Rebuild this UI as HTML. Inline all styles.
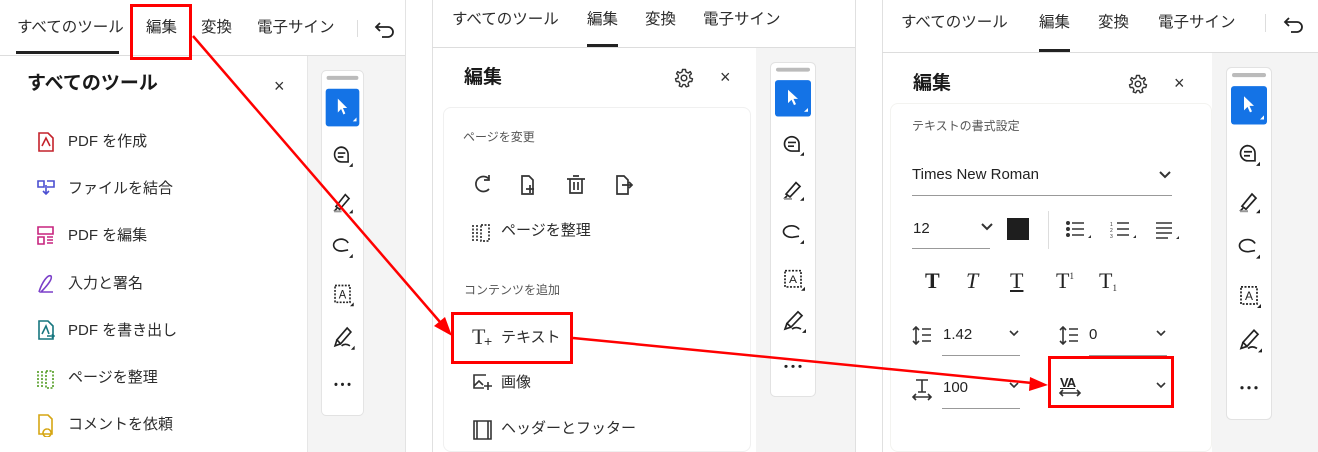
<!DOCTYPE html>
<html><head><meta charset="utf-8">
<style>
*{margin:0;padding:0;box-sizing:border-box}
body{width:1318px;height:452px;background:#fff;position:relative;overflow:hidden;font-family:"Liberation Sans","Noto Sans CJK JP",sans-serif;color:#222}
.a{position:absolute;white-space:nowrap}
.tab{font-size:15.5px;color:#2c2c2c;line-height:20px}
.item{font-size:15px;color:#2c2c2c;line-height:20px}
.h{font-size:19px;font-weight:bold;color:#1a1a1a;line-height:24px}
.sm{font-size:12px;color:#555;line-height:16px}
.gray{position:absolute;background:#f4f4f4}
.line{position:absolute;background:#ddd}
.tb{position:absolute}
.red{position:absolute;border:3.5px solid #f00}
</style></head><body>

<svg width="0" height="0" style="position:absolute">
<symbol id="tbar" viewBox="0 0 46 350" preserveAspectRatio="none">
<rect x="0.5" y="0.5" width="45" height="349" rx="5" fill="#fff" stroke="#e2e2e2"/>
<rect x="6" y="6" width="34" height="4" rx="2" fill="#bbb"/>
<rect x="5" y="19" width="36" height="38" rx="3" fill="#1473e6"/>
<path d="M18 29 V43 L21.5 39.5 L24 45 L26 44 L23.5 38.5 L28 38.5 Z" fill="#fff"/><path d="M34 52 L38 52 L38 48Z" fill="#fff"/>
<g fill="none" stroke="#222" stroke-width="1.7">
<path d="M22 78 a7.5 7.5 0 1 0 0 15 h7 v-7.5 a7.5 7.5 0 0 0 -7 -7.5z M18 84 H26 M18 88 H24"/>
<path d="M16 138 L26 126 L30 130 L20 141 Z M14 143 L17 140"/>
<path d="M29 175 a8 6 0 1 0 -6 8 L29 182"/>
<rect x="15" y="218" width="16" height="17" stroke-dasharray="2 1.5"/>
<path d="M17 273 L28 261 L32 265 L21 277 Z M17 273 L15 279 L21 277 M22 279 q4 -3 9 0"/>
</g>
<path d="M14 143 L22 143" stroke="#999" stroke-width="2"/>
<text x="23" y="231" font-size="12" text-anchor="middle" font-family="Liberation Sans" fill="#222">A</text>
<g fill="#222"><path d="M30 98 L34 98 L34 94Z M30 145 L34 145 L34 141Z M30 190 L34 190 L34 186Z M31 239 L35 239 L35 235Z M32 283 L36 283 L36 279Z"/>
<circle cx="16" cy="318" r="1.6"/><circle cx="23" cy="318" r="1.6"/><circle cx="30" cy="318" r="1.6"/></g>
</symbol>
<symbol id="gear" viewBox="0 0 20 20"><circle cx="10" cy="10" r="2.8" fill="none" stroke="#333" stroke-width="1.5"/><path d="M8.5 1.5 H11.5 L12 4 L14.2 5 L16.3 3.6 L17.4 5.7 L15.6 7.4 L16 10 L18.5 10.8 L17.8 13.5 L15.3 13.5 L14 15.5 L14.8 18 L12.2 18.8 L11 16.6 H9 L7.8 18.8 L5.2 18 L6 15.5 L4.7 13.5 L2.2 13.5 L1.5 10.8 L4 10 L4.4 7.4 L2.6 5.7 L3.7 3.6 L5.8 5 L8 4 Z" fill="none" stroke="#333" stroke-width="1.4" stroke-linejoin="round"/></symbol>
</svg>

<!-- Panel 1 -->
<div class="gray" style="left:308px;top:56px;width:97px;height:396px"></div>
<div class="line" style="left:307px;top:56px;width:1px;height:396px;background:#e6e6e6"></div>
<div class="line" style="left:0;top:55px;width:405px;height:1px"></div>
<div class="line" style="left:405px;top:0;width:1px;height:452px;background:#e3e3e3"></div>
<div class="a tab" style="left:17px;top:18px">すべてのツール</div>
<div class="a tab" style="left:146px;top:18px">編集</div>
<div class="a tab" style="left:201px;top:18px">変換</div>
<div class="a tab" style="left:257px;top:18px">電子サイン</div>
<div class="line" style="left:357px;top:20px;width:1px;height:17px"></div>
<svg class="a" style="left:374px;top:20px" width="22" height="18" viewBox="0 0 22 18"><path d="M6 3 L2 7 L6 11 M2 7 H14 a5 5 0 0 1 0 10 H8" fill="none" stroke="#222" stroke-width="1.8"/></svg>
<div class="a" style="left:16px;top:51px;width:103px;height:3px;background:#222"></div>
<div class="a h" style="left:27px;top:72px">すべてのツール</div>
<div class="a" style="left:274px;top:76px;font-size:18px;color:#333">×</div>

<svg class="a" style="left:36px;top:132px" width="20" height="305" viewBox="0 0 20 305">
<g fill="none" stroke-width="1.6">
<path d="M3 1 H12 L17 6 V19 H3 Z M6 14 L10 6 L14 14" stroke="#c4222b"/>
<path d="M2 49 H8 V55 H2 Z M11 49 H18 V55 H11 M10 53 V62 M7 59 L10 62 L13 59" stroke="#4b4fd1"/>
<path d="M2 95 H17 V102 H2 Z M2 105 H8 V112 H2 Z M11 105 H17 M11 108 H17 M11 111 H17" stroke="#c7247e"/>
<path d="M3 160 C6 150 12 142 15 144 C17 147 10 155 5 160 H17" stroke="#7b3fc9"/>
<path d="M3 189 H12 L17 194 V207 H3 Z M6 202 L10 194 L13 202 M11 204 H18 M16 202 L18 204 L16 206" stroke="#17767f"/>
<path d="M2 239 V256 M6 239 V256 M10 239 H17 V256 H10 Z" stroke="#4f9b1f" stroke-dasharray="2 1.5"/>
<path d="M3 283 H12 L16 287 V302 H3 Z M11 297 a4 4 0 1 0 0.1 0" stroke="#d6a614"/>
</g></svg>
<div class="a item" style="left:68px;top:132px">PDF を作成</div>
<div class="a item" style="left:68px;top:179px">ファイルを結合</div>
<div class="a item" style="left:68px;top:226px">PDF を編集</div>
<div class="a item" style="left:68px;top:274px">入力と署名</div>
<div class="a item" style="left:68px;top:321px">PDF を書き出し</div>
<div class="a item" style="left:68px;top:368px">ページを整理</div>
<div class="a item" style="left:68px;top:415px">コメントを依頼</div>

<!-- Panel 2 -->
<div class="gray" style="left:756px;top:48px;width:99px;height:404px"></div>
<div class="line" style="left:432px;top:0;width:1px;height:452px;background:#e0e0e0"></div>
<div class="line" style="left:855px;top:0;width:1px;height:452px;background:#e0e0e0"></div>
<div class="line" style="left:432px;top:47px;width:423px;height:1px"></div>
<div class="a tab" style="left:452px;top:10px">すべてのツール</div>
<div class="a tab" style="left:587px;top:10px">編集</div>
<div class="a tab" style="left:645px;top:10px">変換</div>
<div class="a tab" style="left:703px;top:10px">電子サイン</div>
<div class="a" style="left:587px;top:44px;width:31px;height:3px;background:#222"></div>
<div class="a h" style="left:464px;top:66px">編集</div>
<div class="a" style="left:720px;top:67px;font-size:18px;color:#333">×</div>
<svg class="a" style="left:674px;top:68px" width="20" height="20"><use href="#gear"/></svg>
<div class="a" style="left:443px;top:107px;width:308px;height:345px;border:1px solid #f0f0f0;border-radius:8px"></div>
<div class="a sm" style="left:463px;top:129px">ページを変更</div>
<svg class="a" style="left:470px;top:173px" width="170" height="70" viewBox="0 0 170 70">
<g fill="none" stroke="#333" stroke-width="1.7">
<path d="M19 6 A7.5 7.5 0 1 0 19 16 M19 2 V7 H14"/>
<path d="M52 3 H59 L63 7 V21 H52 Z M60 12 V20 M56 16 H64"/>
<path d="M97 6 H115 M100 6 V20 H112 V6 M103 3 H109 M104 9 V17 M108 9 V17"/>
<path d="M147 3 H154 L158 7 V21 H147 Z M152 12 H162 M159 9 L162 12 L159 15"/>
<path d="M3 52 V68 M7 52 V68 M11 52 H19 V68 H11 Z" stroke-dasharray="2 1.5"/>
</g></svg>
<div class="a item" style="left:501px;top:221px">ページを整理</div>
<div class="a sm" style="left:464px;top:282px">コンテンツを追加</div>
<div class="a" style="left:472px;top:324px;font-family:'Liberation Serif',serif;font-size:22px;color:#333">T</div>
<div class="a" style="left:484px;top:333px;font-size:14px;color:#333">+</div>
<div class="a item" style="left:501px;top:328px">テキスト</div>
<svg class="a" style="left:472px;top:373px" width="22" height="68" viewBox="0 0 22 68"><g fill="none" stroke="#333" stroke-width="1.6"><path d="M14 2 H2 V15 H12 M2 13 L7 8 L11 12 M16 9 V17 M12 13 H20"/><path d="M2 48 H19 V66 H2 Z M5 48 V66 M16 48 V66" /></g></svg>
<div class="a item" style="left:501px;top:373px">画像</div>
<div class="a item" style="left:501px;top:419px">ヘッダーとフッター</div>

<!-- Panel 3 -->
<div class="gray" style="left:1212px;top:53px;width:106px;height:399px"></div>
<div class="line" style="left:882px;top:0;width:1px;height:452px;background:#e0e0e0"></div>
<div class="line" style="left:882px;top:52px;width:436px;height:1px"></div>
<div class="a tab" style="left:901px;top:13px">すべてのツール</div>
<div class="a tab" style="left:1039px;top:13px">編集</div>
<div class="a tab" style="left:1098px;top:13px">変換</div>
<div class="a tab" style="left:1158px;top:13px">電子サイン</div>
<div class="line" style="left:1265px;top:14px;width:1px;height:18px"></div>
<svg class="a" style="left:1283px;top:15px" width="22" height="18" viewBox="0 0 22 18"><path d="M6 3 L2 7 L6 11 M2 7 H14 a5 5 0 0 1 0 10 H8" fill="none" stroke="#222" stroke-width="1.8"/></svg>
<div class="a" style="left:1039px;top:49px;width:31px;height:3px;background:#222"></div>
<div class="a h" style="left:913px;top:72px">編集</div>
<div class="a" style="left:1174px;top:73px;font-size:18px;color:#333">×</div>
<svg class="a" style="left:1128px;top:74px" width="20" height="20"><use href="#gear"/></svg>
<div class="a" style="left:890px;top:103px;width:322px;height:349px;border:1px solid #f3f3f0;border-radius:8px"></div>
<div class="a sm" style="left:912px;top:118px">テキストの書式設定</div>
<div class="a" style="left:912px;top:166px;font-size:15px;color:#222">Times New Roman</div>
<div class="line" style="left:912px;top:195px;width:260px;height:1px;background:#999"></div>
<div class="a" style="left:913px;top:220px;font-size:15px">12</div>
<div class="line" style="left:912px;top:248px;width:78px;height:1px;background:#999"></div>
<div class="a" style="left:1007px;top:218px;width:22px;height:22px;background:#1e1e1e"></div>
<div class="line" style="left:1048px;top:211px;width:1px;height:38px"></div>
<svg class="a" style="left:1066px;top:220px" width="116" height="22" viewBox="0 0 116 22"><g stroke="#333" stroke-width="1.6" fill="#333">
<circle cx="2" cy="3" r="1.2"/><circle cx="2" cy="9" r="1.2"/><circle cx="2" cy="15" r="1.2"/><path d="M6 3 H18 M6 9 H18 M6 15 H18"/>
<path d="M51 3 H63 M51 9 H63 M51 15 H63"/><text x="44" y="6" font-size="5" stroke="none">1</text><text x="44" y="12" font-size="5" stroke="none">2</text><text x="44" y="18" font-size="5" stroke="none">3</text>
<path d="M90 3 H106 M90 8 H106 M90 13 H106 M90 18 H102"/>
<path d="M22 18 L25 18 L25 15Z M67 18 L70 18 L70 15Z M110 19 L113 19 L113 16Z" stroke="none"/></g></svg>
<div class="a" style="left:925px;top:268px;font-family:'Liberation Serif',serif;font-size:22px;font-weight:bold">T</div>
<div class="a" style="left:966px;top:268px;font-family:'Liberation Serif',serif;font-size:22px;font-style:italic">T</div>
<div class="a" style="left:1010px;top:268px;font-family:'Liberation Serif',serif;font-size:22px;text-decoration:underline">T</div>
<div class="a" style="left:1056px;top:268px;font-family:'Liberation Serif',serif;font-size:22px">T<span style="font-size:9px;vertical-align:9px">1</span></div>
<div class="a" style="left:1099px;top:268px;font-family:'Liberation Serif',serif;font-size:22px">T<span style="font-size:9px;vertical-align:-3px">1</span></div>
<svg class="a" style="left:912px;top:326px" width="260" height="75" viewBox="0 0 260 75"><g fill="none" stroke="#333" stroke-width="1.6">
<path d="M4 1 V18 M1 4 L4 1 L7 4 M1 15 L4 18 L7 15 M10 3 H19 M10 9 H19 M10 15 H19"/>
<path d="M151 1 V18 M148 4 L151 1 L154 4 M148 15 L151 18 L154 15 M157 3 H166 M157 9 H166 M157 15 H166"/>
<path d="M4 54 H16 M10 54 V66 M6 66 H14 M1 71 H19 M4 68 L1 71 L4 74 M16 68 L19 71 L16 74"/>
<path d="M148 67 H168 M151 64 L148 67 L151 70 M165 64 L168 67 L165 70"/>
<path d="M98 5 L102 9 L106 5 M245 5 L249 9 L253 5 M98 57 L102 61 L106 57 M245 57 L249 61 L253 57"/>
</g></svg>
<div class="a" style="left:943px;top:326px;font-size:15px">1.42</div>
<div class="line" style="left:942px;top:355px;width:78px;height:1px;background:#999"></div>
<div class="a" style="left:1089px;top:326px;font-size:15px">0</div>
<div class="line" style="left:1089px;top:355px;width:78px;height:1px;background:#999"></div>
<div class="a" style="left:943px;top:379px;font-size:15px">100</div>
<div class="line" style="left:942px;top:408px;width:78px;height:1px;background:#999"></div>
<div class="a" style="left:1060px;top:375px;font-size:13px;font-weight:bold;letter-spacing:-1px;text-decoration:underline">VA</div>
<svg class="a" style="left:1157px;top:167px" width="16" height="14" viewBox="0 0 16 14"><path d="M3 5 L8 10 L13 5" fill="none" stroke="#333" stroke-width="2"/></svg>
<svg class="a" style="left:980px;top:222px" width="14" height="10" viewBox="0 0 14 10"><path d="M2 2 L7 7 L12 2" fill="none" stroke="#333" stroke-width="2"/></svg>

<!-- toolbars -->
<svg class="tb" style="left:321px;top:70px" width="43" height="346"><use href="#tbar" width="43" height="346"/></svg>
<svg class="tb" style="left:770px;top:62px" width="46" height="335"><use href="#tbar" width="46" height="335"/></svg>
<svg class="tb" style="left:1226px;top:67px" width="46" height="353"><use href="#tbar" width="46" height="353"/></svg>

<!-- red boxes & arrows -->
<div class="red" style="left:130px;top:4px;width:62px;height:56px"></div>
<div class="red" style="left:451px;top:312px;width:122px;height:52px"></div>
<div class="red" style="left:1048px;top:356px;width:126px;height:52px"></div>
<svg class="a" style="left:0;top:0" width="1318" height="452" viewBox="0 0 1318 452">
<g stroke="#f00" stroke-width="2.5" fill="#f00">
<line x1="193" y1="36" x2="440" y2="322"/>
<path d="M452 336 L434 326 L445 317 Z" stroke="none"/>
<line x1="573" y1="338" x2="1032" y2="383"/>
<path d="M1048 385 L1030 377 L1029 391 Z" stroke="none"/>
</g></svg>
</body></html>
